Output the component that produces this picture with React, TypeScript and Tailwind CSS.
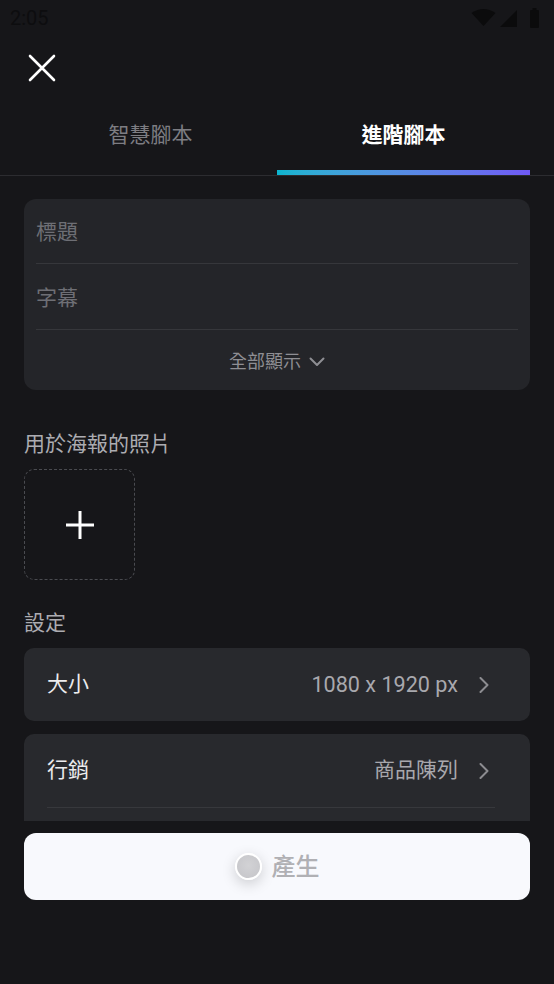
import React from "react";

const FONT = { fontFamily: "Roboto, 'Noto Sans CJK TC', 'Noto Sans', sans-serif" };

function Chevron() {
  return (
    <svg width="10" height="16" viewBox="0 0 10 16" fill="none">
      <path d="M1.5 1 L8.5 8 L1.5 15" stroke="#8c8c90" strokeWidth="2" strokeLinecap="round" strokeLinejoin="round" />
    </svg>
  );
}

function SettingRow({ label, value, num }: { label: string; value: string; num?: boolean }) {
  return (
    <div className="flex items-center h-[73px]">
      <span className="text-[21px] text-[#ececee] flex-1 pt-[1px]">{label}</span>
      <span className={(num ? "text-[21.6px]" : "text-[21px]") + " text-[#a8a8ad] mr-[21px] pt-[1px]"}>{value}</span>
      <div className="w-[10px] flex items-center mr-[6px]">
        <Chevron />
      </div>
    </div>
  );
}

export default function App() {
  return (
    <div className="w-[554px] h-[984px] bg-[#161619] flex flex-col overflow-hidden" style={FONT}>
      {/* status bar */}
      <div className="h-[36px] flex items-center justify-between pl-[10px] pr-[14px] shrink-0">
        <span className="text-[20px] text-[#0d0d0f] leading-none">2:05</span>
        <div className="flex items-center gap-[4px]">
          <svg width="25" height="18" viewBox="0 0 25 18">
            <path d="M0.5 4 Q12.5 -4 24.5 4 L12.5 17 Z" fill="#0b0b0c" />
          </svg>
          <svg width="18" height="17" viewBox="0 0 18 17">
            <path d="M17 0 L17 17 L0 17 Z" fill="#0b0b0c" />
          </svg>
          <svg width="10" height="20" viewBox="0 0 10 20" className="ml-[8px]">
            <rect x="0" y="2" width="9" height="18" rx="1" fill="#0b0b0c" />
            <rect x="2.5" y="0" width="4" height="3" fill="#0b0b0c" />
          </svg>
        </div>
      </div>

      {/* header */}
      <div className="h-[64px] flex items-center pl-[28px] shrink-0">
        <svg width="28" height="28" viewBox="0 0 28 28">
          <path d="M2 2 L26 26 M26 2 L2 26" stroke="#ffffff" strokeWidth="2.6" strokeLinecap="round" />
        </svg>
      </div>

      {/* tabs */}
      <div className="flex px-[24px] border-b border-[#2c2c30] shrink-0">
        <div className="flex-1 flex flex-col">
          <div className="h-[70px] flex items-center justify-center pt-[2px] text-[21px] text-[#7d7d82]">智慧腳本</div>
          <div className="h-[5px]" />
        </div>
        <div className="flex-1 flex flex-col">
          <div className="h-[70px] flex items-center justify-center pt-[2px] text-[21px] font-bold text-white">進階腳本</div>
          <div className="h-[5px] bg-gradient-to-r from-[#08b5cf] to-[#6f59f5]" />
        </div>
      </div>

      {/* scroll content */}
      <div className="h-[645px] overflow-hidden px-[24px] pt-[23px] shrink-0">
        <div className="bg-[#242529] rounded-[12px] px-[12px]">
          <div className="h-[65px] flex items-center pt-[4px] border-b border-[#36373b]">
            <span className="text-[21px] text-[#6e6f75]">標題</span>
          </div>
          <div className="h-[66px] flex items-center pt-[4px] border-b border-[#36373b]">
            <span className="text-[21px] text-[#6e6f75]">字幕</span>
          </div>
          <div className="h-[60px] flex items-center justify-center gap-[8px] pt-[3px]">
            <span className="text-[18px] text-[#8e8e93]">全部顯示</span>
            <svg width="16" height="10" viewBox="0 0 16 10">
              <path d="M1.5 1.5 L8 8 L14.5 1.5" stroke="#8e8e93" strokeWidth="2" fill="none" strokeLinecap="round" strokeLinejoin="round" />
            </svg>
          </div>
        </div>

        <div className="mt-[40px] text-[21px] leading-[28px] text-[#acacb1]">用於海報的照片</div>

        <div className="mt-[11px] w-[111px] h-[111px] rounded-[10px] border border-dashed border-[#4a4b50] flex items-center justify-center">
          <svg width="30" height="30" viewBox="0 0 30 30">
            <path d="M15 1 L15 29 M1 15 L29 15" stroke="#ffffff" strokeWidth="3" />
          </svg>
        </div>

        <div className="mt-[29px] text-[21px] leading-[28px] text-[#acacb1]">設定</div>

        <div className="mt-[11px] bg-[#28292d] rounded-[10px] pl-[23px] pr-[35px]">
          <SettingRow label="大小" value="1080 x 1920 px" num />
        </div>

        <div className="mt-[13px] bg-[#28292d] rounded-[10px] pl-[23px] pr-[35px]">
          <div className="border-b border-[#37383c]">
            <SettingRow label="行銷" value="商品陳列" />
          </div>
          <div className="h-[73px]" />
        </div>
      </div>

      {/* button */}
      <div className="px-[24px] pt-[12px]">
        <div className="h-[67px] rounded-[12px] bg-[#f8f9fd] flex items-center justify-center gap-[10px]">
          <div className="w-[27px] h-[27px] rounded-full border-[2px] border-white bg-[radial-gradient(circle_at_50%_45%,#d2d2d5,#c4c4c8)] shadow-[0_4px_14px_rgba(0,0,0,0.18)]" />
          <span className="text-[24px] text-[#b0b0b4] font-medium">產生</span>
        </div>
      </div>
    </div>
  );
}
